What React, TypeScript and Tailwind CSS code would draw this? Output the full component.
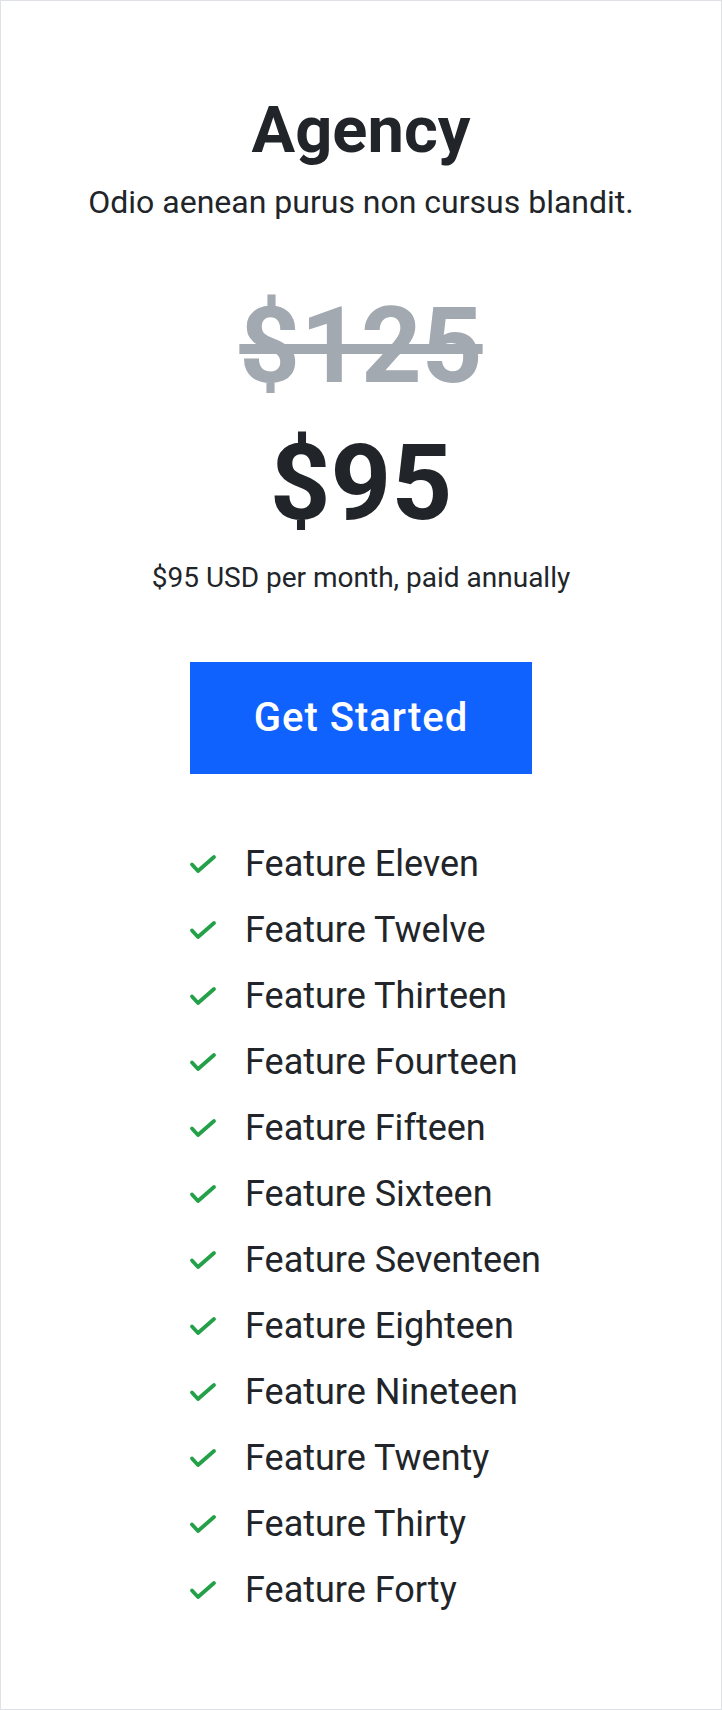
import React from 'react';

const features = [
  'Feature Eleven',
  'Feature Twelve',
  'Feature Thirteen',
  'Feature Fourteen',
  'Feature Fifteen',
  'Feature Sixteen',
  'Feature Seventeen',
  'Feature Eighteen',
  'Feature Nineteen',
  'Feature Twenty',
  'Feature Thirty',
  'Feature Forty',
];

const Check = () => (
  <svg width="30" height="30" viewBox="0 0 30 30" fill="none" className="shrink-0">
    <path
      d="M4 15.5 L10 22 L26 8"
      stroke="#24a148"
      strokeWidth="3.8"
      strokeLinecap="round"
      strokeLinejoin="round"
    />
  </svg>
);

const App = () => {
  return (
    <div
      className="w-[722px] h-[1710px] bg-white border border-[#dee2e6] text-[#212529] flex flex-col items-center pt-[96px]"
      style={{ fontFamily: 'Roboto, "Noto Sans", sans-serif' }}
    >
      <h2 className="text-[65px] leading-[66px] font-bold">Agency</h2>
      <p className="mt-[19px] text-[32px] leading-[40px]">Odio aenean purus non cursus blandit.</p>

      <div className="mt-[71px] text-[106px] leading-[106px] font-bold text-[#a2a9b1] line-through">
        $125
      </div>
      <div className="mt-[31px] text-[106px] leading-[106px] font-bold">$95</div>
      <p className="mt-[24px] text-[28px] leading-[36px]">$95 USD per month, paid annually</p>

      <button className="mt-[66px] w-[342px] h-[112px] bg-[#0f62fe] text-white text-[40px] font-medium tracking-[1px]">
        Get Started
      </button>

      <ul className="mt-[57px] ml-[7px] flex flex-col">
        {features.map((f) => (
          <li key={f} className="flex items-center gap-[27px] h-[66px] text-[36px] leading-[66px]">
            <Check />
            <span>{f}</span>
          </li>
        ))}
      </ul>
    </div>
  );
};

export default App;
